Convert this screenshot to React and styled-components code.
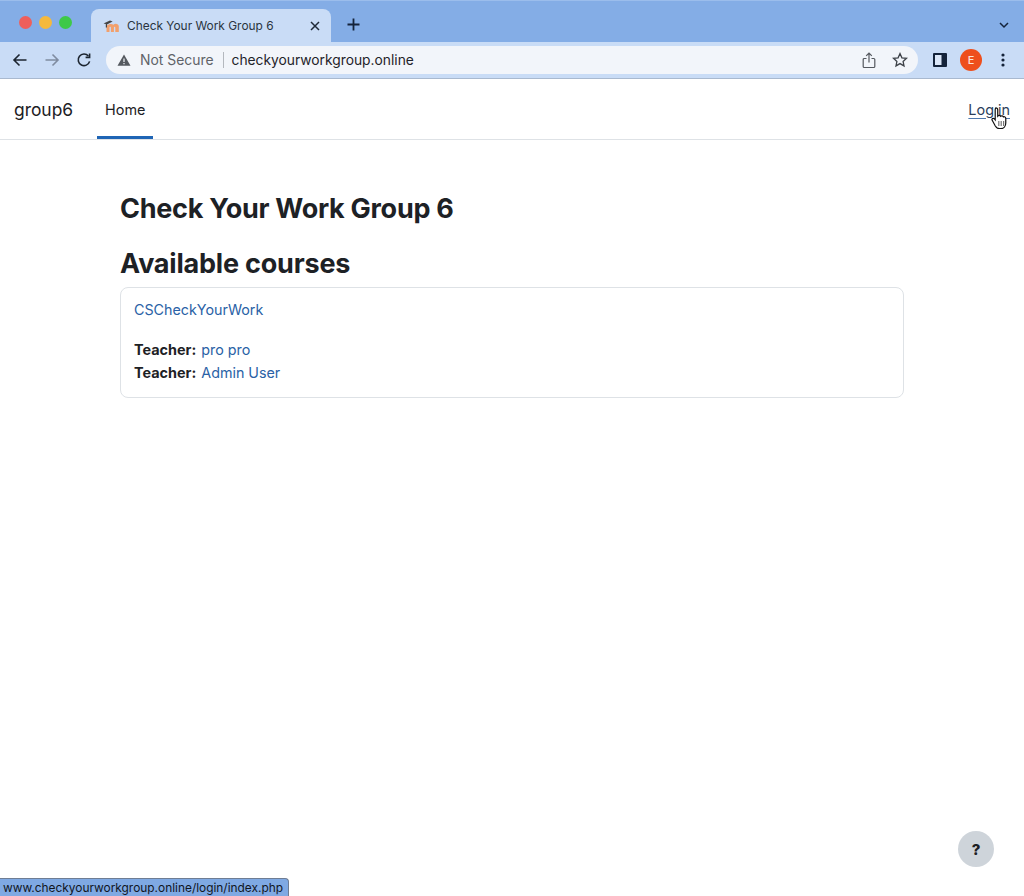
import React from "react";
import styled, { createGlobalStyle } from "styled-components";

const GlobalStyle = createGlobalStyle`
  html, body {
    margin: 0;
    padding: 0;
    height: 100%;
    background: #fff;
    overflow: hidden;
  }
  body {
    font-family: Inter, "Liberation Sans", sans-serif;
    color: #1d2125;
  }
`;

const Page = styled.div`
  position: relative;
  width: 1024px;
  height: 896px;
  overflow: hidden;
  background: #fff;
`;

const TabStrip = styled.div`
  height: 42px;
  box-sizing: border-box;
  padding: 8px 15px 0 19px;
  display: flex;
  align-items: flex-start;
  background: #84ade6;
  border-top: 1px solid #9bbdec;
`;

const Lights = styled.div`
  display: flex;
  gap: 7px;
  padding-top: 7px;
  margin-right: 19px;
`;

const Light = styled.span`
  width: 13px;
  height: 13px;
  border-radius: 50%;
  background: ${(p) => p.$color};
`;

const Tab = styled.div`
  width: 240px;
  height: 33px;
  box-sizing: border-box;
  padding: 0 11px 0 12px;
  display: flex;
  align-items: center;
  border-radius: 8px 8px 0 0;
  background: #c9dcf6;
  font-size: 11.9px;
  color: #2a3440;
`;

const TabTitle = styled.span`
  flex: 1;
  margin-left: 8px;
  white-space: nowrap;
`;

const NewTab = styled.div`
  margin-left: 16px;
  padding-top: 9px;
  display: flex;
`;

const Spacer = styled.div`
  flex: 1;
`;

const TabMenu = styled.div`
  padding-top: 13px;
  display: flex;
`;

const Toolbar = styled.div`
  height: 37px;
  box-sizing: border-box;
  padding: 0 12px 0 11px;
  display: flex;
  align-items: center;
  background: #c9dcf6;
  border-bottom: 1px solid #a9b9cf;
`;

const NavIcons = styled.div`
  display: flex;
  gap: 14px;
  margin-right: 13px;
`;

const Omnibox = styled.div`
  width: 812px;
  height: 28px;
  box-sizing: border-box;
  padding: 0 10px 0 11px;
  display: flex;
  align-items: center;
  border-radius: 14px;
  background: #f2f5fa;
`;

const NotSecure = styled.span`
  margin-left: 9px;
  padding-right: 9px;
  border-right: 1px solid #b4b8be;
  line-height: 16px;
  color: #5f6368;
  font-size: 13.9px;
  white-space: nowrap;
`;

const Address = styled.span`
  flex: 1;
  margin-left: 8px;
  color: #1f2329;
  font-size: 13.8px;
  white-space: nowrap;
`;

const OmniIcons = styled.div`
  display: flex;
  gap: 16px;
`;

const ToolIcons = styled.div`
  display: flex;
  align-items: center;
  margin-left: 15px;
  gap: 13px;
`;

const Avatar = styled.span`
  width: 22px;
  height: 22px;
  margin-right: 6px;
  border-radius: 50%;
  display: flex;
  align-items: center;
  justify-content: center;
  background: #ee4f1c;
  color: #fde3d8;
  font-size: 11px;
  font-weight: 500;
`;

const Navbar = styled.nav`
  height: 61px;
  box-sizing: border-box;
  padding: 0 14px;
  display: flex;
  align-items: stretch;
  border-bottom: 1px solid #dee2e6;
  background: #fff;
`;

const Brand = styled.a`
  align-self: center;
  margin-right: 24px;
  font-size: 17.4px;
  color: #1d2125;
`;

const NavItem = styled.a`
  display: flex;
  align-items: center;
  padding: 3px 8px 0;
  border-bottom: 3px solid #1f65b5;
  box-sizing: border-box;
  font-size: 14.4px;
  color: #1d2125;
`;

const LoginLink = styled.a`
  align-self: center;
  font-size: 14.4px;
  color: #2c3f5c;
  text-decoration: underline;
  text-decoration-color: #4f79ad;
  text-underline-offset: 3px;
`;

const Main = styled.main`
  width: 784px;
  margin: 0 auto;
  padding-top: 51px;
`;

const Title = styled.h1`
  margin: 0 0 19px;
  font-size: 27px;
  line-height: 36px;
  font-weight: 700;
  letter-spacing: -0.28px;
  color: #1d2125;
`;

const Section = styled.h2`
  margin: 0 0 5px;
  font-size: 27px;
  line-height: 36px;
  font-weight: 700;
  letter-spacing: -0.2px;
  color: #1d2125;
`;

const Card = styled.div`
  height: 111px;
  box-sizing: border-box;
  padding: 11px 13px;
  border: 1px solid #dee2e6;
  border-radius: 8px;
  font-size: 14.4px;
  line-height: 22px;
`;

const CourseLink = styled.a`
  display: block;
  margin-bottom: 17px;
  font-size: 14.3px;
  color: #2a62a6;
`;

const Teacher = styled.div`
  line-height: 23px;
  color: #1d2125;
`;

const TeacherLink = styled.a`
  margin-left: 1px;
  font-size: 14.3px;
  color: #2a62a6;
`;

const StatusBubble = styled.div`
  position: absolute;
  left: 0;
  bottom: 0;
  width: 289px;
  height: 18px;
  box-sizing: border-box;
  padding-left: 3px;
  border-radius: 0 4px 0 0;
  border-top: 1px solid #6e7d94;
  border-right: 1px solid #6e7d94;
  background: #7fa9e3;
  color: #10161f;
  font-size: 11.9px;
  line-height: 18px;
  white-space: nowrap;
`;

const HelpButton = styled.div`
  position: absolute;
  right: 30px;
  bottom: 29px;
  width: 36px;
  height: 36px;
  border-radius: 50%;
  display: flex;
  align-items: center;
  justify-content: center;
  background: #ced4da;
  color: #1d2125;
  font-size: 15px;
  font-weight: 800;
`;

const Cursor = styled.svg`
  position: absolute;
  left: 991px;
  top: 106px;
`;

const Favicon = () => (
  <svg width="16" height="14" viewBox="0 0 16 14">
    <path d="M3.5 6.5V13h3V8.6c0-1 1.4-1 1.4 0V13h3V8.6c0-1 1.4-1 1.4 0V13H15.8V7.6c0-2.8-3.6-3.6-5.4-1.8C9 4.4 6 4.6 3.5 6.5z" fill="#f2a06c" />
    <path d="M0.5 4.6 7 1.4l2.6 1.2L4 5.4v3.2H2.8V5z" fill="#444" />
  </svg>
);

const Close = () => (
  <svg width="10" height="10" viewBox="0 0 10 10" fill="none" stroke="#1f2a38" strokeWidth="1.5">
    <path d="M1 1l8 8M9 1l-8 8" />
  </svg>
);

const Plus = () => (
  <svg width="13" height="13" viewBox="0 0 13 13" fill="none" stroke="#14233a" strokeWidth="1.8">
    <path d="M6.5 0.5v12M0.5 6.5h12" />
  </svg>
);

const Chevron = () => (
  <svg width="10" height="7" viewBox="0 0 10 7" fill="none" stroke="#14233a" strokeWidth="1.5">
    <path d="M1 1l4 4 4-4" />
  </svg>
);

const ArrowLeft = ({ color = "#1c2530" }) => (
  <svg width="18" height="18" viewBox="0 0 18 18" fill="none" stroke={color} strokeWidth="1.6">
    <path d="M15.5 9H3M8.5 3.5 3 9l5.5 5.5" />
  </svg>
);

const ArrowRight = ({ color }) => (
  <svg width="18" height="18" viewBox="0 0 18 18" fill="none" stroke={color} strokeWidth="1.6">
    <path d="M2.5 9H15M9.5 3.5 15 9l-5.5 5.5" />
  </svg>
);

const Reload = () => (
  <svg width="18" height="18" viewBox="0 0 18 18" fill="none" stroke="#1c2530" strokeWidth="1.6">
    <path d="M14.6 10.4A5.8 5.8 0 1 1 13.4 5" />
    <path d="M14.6 2.4v4h-4" />
  </svg>
);

const Warning = () => (
  <svg width="14" height="12" viewBox="0 0 14 12">
    <path d="M7 0.5 13.5 11.8H0.5z" fill="#55595f" />
    <path d="M6.4 4.5h1.2v3.6H6.4zM6.4 9h1.2v1.2H6.4z" fill="#f2f5fb" />
  </svg>
);

const Share = () => (
  <svg width="14" height="17" viewBox="0 0 14 17" fill="none" stroke="#55595f" strokeWidth="1.2">
    <path d="M4.5 6.5H2.2a1 1 0 0 0-1 1v7a1 1 0 0 0 1 1h9.6a1 1 0 0 0 1-1v-7a1 1 0 0 0-1-1H9.5" />
    <path d="M7 10.5V1.2M4.2 3.8 7 1l2.8 2.8" />
  </svg>
);

const Star = () => (
  <svg width="16" height="16" viewBox="0 0 16 16" fill="none" stroke="#3d4248" strokeWidth="1.3">
    <path d="M8 1.6l1.9 4.2 4.6.5-3.4 3.1.9 4.5L8 11.6l-4 2.3.9-4.5L1.5 6.3l4.6-.5z" />
  </svg>
);

const SidePanel = () => (
  <svg width="14" height="14" viewBox="0 0 14 14">
    <rect x="0" y="0" width="14" height="14" rx="1" fill="#14233a" />
    <rect x="2" y="2" width="6.5" height="10" fill="#dbe7f8" />
  </svg>
);

const Dots = () => (
  <svg width="4" height="14" viewBox="0 0 4 14" fill="#14233a">
    <circle cx="2" cy="2" r="1.6" />
    <circle cx="2" cy="7" r="1.6" />
    <circle cx="2" cy="12" r="1.6" />
  </svg>
);

const App = () => (
  <Page>
    <GlobalStyle />
    <TabStrip>
      <Lights>
        <Light $color="#ee5f5b" />
        <Light $color="#f5b93d" />
        <Light $color="#3ec948" />
      </Lights>
      <Tab>
        <Favicon />
        <TabTitle>Check Your Work Group 6</TabTitle>
        <Close />
      </Tab>
      <NewTab>
        <Plus />
      </NewTab>
      <Spacer />
      <TabMenu>
        <Chevron />
      </TabMenu>
    </TabStrip>

    <Toolbar>
      <NavIcons>
        <ArrowLeft />
        <ArrowRight color="#7f8ca0" />
        <Reload />
      </NavIcons>
      <Omnibox>
        <Warning />
        <NotSecure>Not Secure</NotSecure>
        <Address>checkyourworkgroup.online</Address>
        <OmniIcons>
          <Share />
          <Star />
        </OmniIcons>
      </Omnibox>
      <ToolIcons>
        <SidePanel />
        <Avatar>E</Avatar>
        <Dots />
      </ToolIcons>
    </Toolbar>

    <Navbar>
      <Brand>group6</Brand>
      <NavItem>Home</NavItem>
      <Spacer />
      <LoginLink>Log in</LoginLink>
    </Navbar>

    <Main>
      <Title>Check Your Work Group 6</Title>
      <Section>Available courses</Section>
      <Card>
        <CourseLink>CSCheckYourWork</CourseLink>
        <Teacher>
          <strong>Teacher:</strong> <TeacherLink>pro pro</TeacherLink>
        </Teacher>
        <Teacher>
          <strong>Teacher:</strong> <TeacherLink>Admin User</TeacherLink>
        </Teacher>
      </Card>
    </Main>

    <HelpButton>?</HelpButton>
    <StatusBubble>www.checkyourworkgroup.online/login/index.php</StatusBubble>
    <Cursor width="18" height="23" viewBox="0 0 15 19">
      <path
        d="M4 1.5c1 0 1.6.6 1.6 1.6v5.2c.6-.8 2-.7 2.4.2.7-.6 2-.4 2.3.5.8-.4 2 .1 2 1.2v3.8c0 2.5-1.5 4.8-4 4.8H7c-1.6 0-2.6-.9-3.4-2.2L1 11.8c-.7-1.2.8-2.2 1.8-1.2l.7.8V3.1c0-1 .5-1.6.5-1.6z"
        fill="#fff"
        stroke="#111"
        strokeWidth="1"
      />
      <path d="M6.5 12.5v4M8.5 12.5v4M10.5 12.5v4" stroke="#777" strokeWidth="1" />
    </Cursor>
  </Page>
);

export default App;
